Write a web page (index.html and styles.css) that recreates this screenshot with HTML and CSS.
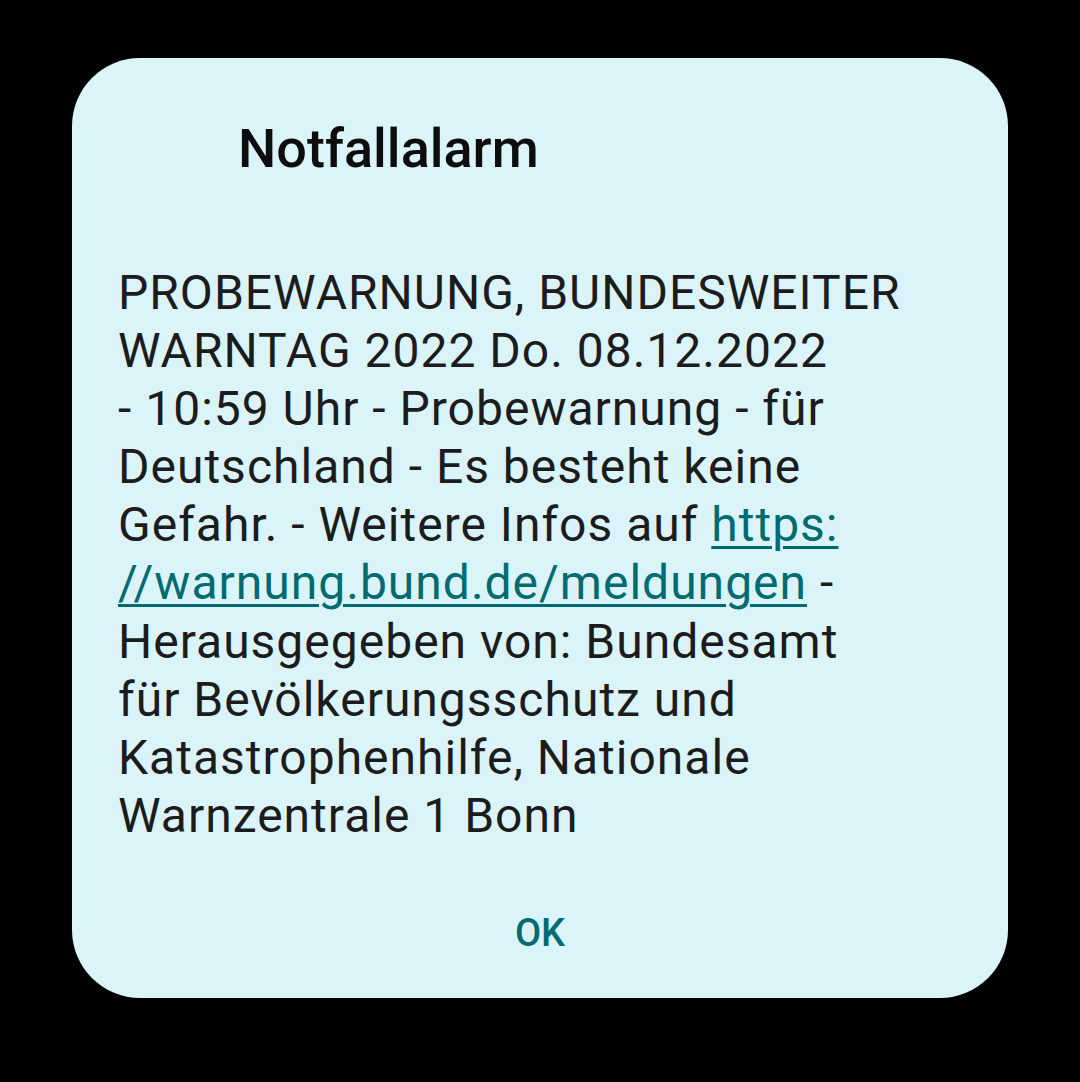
FILE: index.html
```html
<!DOCTYPE html>
<html lang="de">
<head>
    <meta charset="UTF-8">
    <meta name="viewport" content="width=device-width, initial-scale=1.0">
    <title>Notfallalarm</title>
    <link rel="stylesheet" href="styles.css">
</head>
<body>
    <div class="dialog">
        <h1 class="dialog-title">Notfallalarm</h1>
        <p class="dialog-text">PROBEWARNUNG, BUNDESWEITER<br>WARNTAG 2022 Do. 08.12.2022<br>- 10:59 Uhr - Probewarnung - für<br>Deutschland - Es besteht keine<br>Gefahr. - Weitere Infos auf <a href="#">https:<br>//warnung.bund.de/meldungen</a> -<br>Herausgegeben von: Bundesamt<br>für Bevölkerungsschutz und<br>Katastrophenhilfe, Nationale<br>Warnzentrale 1 Bonn</p>
        <div class="dialog-actions">
            <button class="btn-ok">OK</button>
        </div>
    </div>
</body>
</html>
```

FILE: styles.css
```css
/* reset */
* {
    margin: 0;
    padding: 0;
    box-sizing: border-box;
}

body {
    background-color: #000;
    font-family: Roboto, "Noto Sans", sans-serif;
    padding: 58px 72px 0 72px;
    height: 1082px;
}

/* caixa do alerta */
.dialog {
    background-color: #dbf4fa;
    border-radius: 68px;
    height: 940px;
    padding: 60px 46px 0 46px;
}

.dialog-title {
    font-size: 54px;
    line-height: 62px;
    font-weight: 500;
    color: #0d0d0d;
    padding-left: 120px;
}

.dialog-text {
    margin-top: 84px;
    font-size: 48px;
    line-height: 58.1px;
    letter-spacing: 1px;
    color: #1c1c1c;
    white-space: nowrap;
}

.dialog-text a {
    color: #006b70;
    text-decoration: underline;
    text-decoration-thickness: 3px;
    text-underline-offset: 5px;
}

.dialog-actions {
    display: flex;
    justify-content: center;
    margin-top: 64px;
}

.btn-ok {
    background: none;
    border: none;
    font-family: Roboto, sans-serif;
    font-size: 38px;
    line-height: 48px;
    font-weight: 500;
    color: #006b70;
}
```
